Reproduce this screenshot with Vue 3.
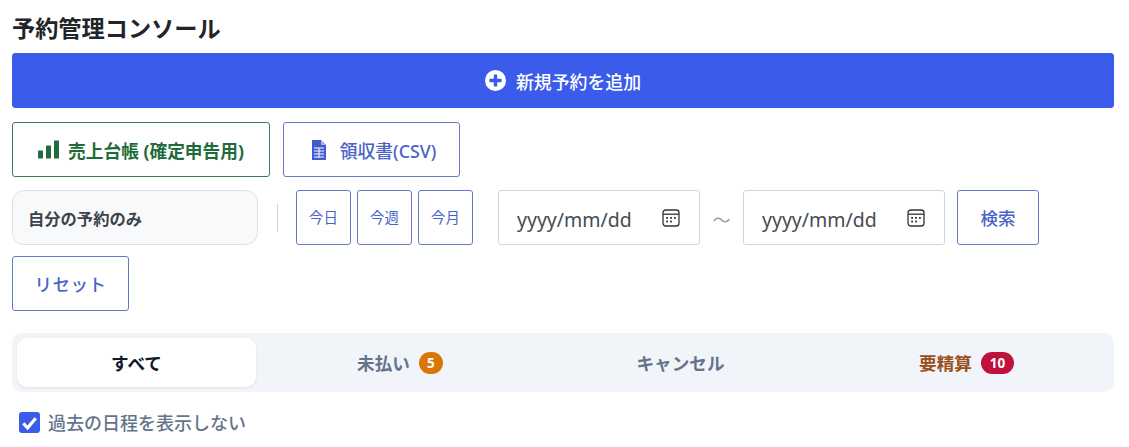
<script setup>
const quick = ['今日', '今週', '今月']
</script>

<template>
  <main class="page">
    <h1 class="title">予約管理コンソール</h1>
    <button class="add">
      <svg class="plus" viewBox="0 0 20 20" width="21" height="21">
        <circle cx="10" cy="10" r="10" fill="#fff" />
        <rect x="4.2" y="8.4" width="11.6" height="3.2" rx="0.6" fill="#3b5bea" />
        <rect x="8.4" y="4.2" width="3.2" height="11.6" rx="0.6" fill="#3b5bea" />
      </svg>
      <span>新規予約を追加</span>
    </button>

    <div class="exports">
      <button class="export green">
        <svg viewBox="0 0 21 18" width="21" height="19" fill="#1f6b3a">
          <rect x="0" y="10" width="5" height="8" rx="0.6" />
          <rect x="8" y="5" width="5" height="13" rx="0.6" />
          <rect x="16" y="0" width="5" height="18" rx="0.6" />
        </svg>
        <span>売上台帳 (確定申告用)</span>
      </button>
      <button class="export blue">
        <svg viewBox="0 0 16 20" width="16" height="20">
          <path d="M1 0h9l5 5v15H1z" fill="#3f5bd0" />
          <path d="M10 0v5h5z" fill="#a9b6ea" />
          <path d="M3 8h10M3 11h10M3 14h10M3 17h10M8 8v10" stroke="#fff" stroke-width="1" fill="none" />
        </svg>
        <span>領収書(CSV)</span>
      </button>
    </div>

    <div class="filters">
      <div class="mine">自分の予約のみ</div>
      <span class="divider"></span>
      <div class="quick">
        <button v-for="q in quick" :key="q" class="small">{{ q }}</button>
      </div>
      <div class="dates">
        <div class="date" v-for="n in 2" :key="n" :class="'date' + n">
          <span class="date-text">yyyy/mm/dd</span>
          <svg viewBox="0 0 18 18" width="18" height="18" fill="none">
            <rect x="1" y="1" width="16" height="16" rx="2.8" stroke="#333" stroke-width="1.3" />
            <path d="M1 5.2h16" stroke="#333" stroke-width="1.3" />
            <g fill="#333">
              <rect x="4.2" y="8" width="1.8" height="1.8" /><rect x="8.1" y="8" width="1.8" height="1.8" /><rect x="12" y="8" width="1.8" height="1.8" />
              <rect x="4.2" y="11.6" width="1.8" height="1.8" /><rect x="8.1" y="11.6" width="1.8" height="1.8" />
            </g>
          </svg>
        </div>
        <span class="tilde">〜</span>
      </div>
      <button class="action search">検索</button>
      <button class="action reset">リセット</button>
    </div>

    <div class="tabs">
      <div class="tab active">すべて</div>
      <div class="tab">未払い <span class="badge orange">5</span></div>
      <div class="tab">キャンセル</div>
      <div class="tab settle">要精算 <span class="badge red">10</span></div>
    </div>

    <label class="past">
      <span class="check">
        <svg viewBox="0 0 22 22" width="22" height="22">
          <path d="M4.5 11.5l4.5 4.5 8.5-10" fill="none" stroke="#fff" stroke-width="3.4" />
        </svg>
      </span>
      <span>過去の日程を表示しない</span>
    </label>
  </main>
</template>

<style>
body { margin: 0; background: #fff; }
</style>

<style scoped>
.page {
  box-sizing: border-box;
  width: 1129px;
  height: 447px;
  overflow: hidden;
  padding: 12px 15px 0 12px;
  font-family: "Noto Sans", "Noto Sans CJK JP", sans-serif;
}
button { font-family: inherit; background: #fff; cursor: pointer; }
.title {
  margin: 0 0 9px;
  font-size: 23.2px;
  line-height: 32px;
  font-weight: 700;
  color: #212529;
}
.add {
  display: flex;
  align-items: center;
  justify-content: center;
  gap: 10px;
  width: 100%;
  height: 55px;
  border: 1px solid #3b5bea;
  border-radius: 3px;
  background: #3b5bea;
  color: #fff;
  font-size: 17.9px;
  font-weight: 500;
}
.exports { display: flex; gap: 13px; margin-top: 14px; }
.export {
  display: flex;
  align-items: center;
  justify-content: center;
  height: 55px;
  padding: 0;
  border-radius: 3px;
  font-size: 17.7px;
}
.green {
  width: 258px;
  gap: 9px;
  border: 1px solid #3f7d55;
  color: #1f6b3a;
  font-weight: 700;
}
.blue {
  width: 177px;
  gap: 13px;
  padding-left: 4px;
  border: 1px solid #6478c8;
  color: #4a63c8;
  font-size: 17.8px;
  font-weight: 500;
}
.filters {
  display: flex;
  flex-wrap: wrap;
  align-items: center;
  gap: 11px 12px;
  margin-top: 13px;
}
.mine {
  box-sizing: border-box;
  display: flex;
  align-items: center;
  width: 246px;
  height: 55px;
  padding-left: 15px;
  border: 1px solid #dee2e6;
  border-radius: 12px;
  background: #f8f9fa;
  color: #3d434a;
  font-size: 16.3px;
  font-weight: 700;
}
.divider { width: 1px; height: 28px; margin: 0 6px 0 7px; background: #ced4da; }
.quick { display: flex; gap: 6px; }
.small {
  box-sizing: border-box;
  width: 55px;
  height: 55px;
  padding: 0 0 2px;
  border: 1px solid #6478c8;
  border-radius: 3px;
  color: #4a63c8;
  font-size: 14.4px;
}
.dates {
  display: grid;
  grid-template-columns: 202px 43px 202px;
  align-items: center;
  margin-left: 13px;
}
.date {
  box-sizing: border-box;
  display: flex;
  align-items: center;
  justify-content: space-between;
  height: 55px;
  padding: 0 19px 0 18px;
  border: 1px solid #ced4da;
  border-radius: 3px;
  color: #454b52;
  font-size: 19.5px;
}
.date-text { padding-top: 3px; }
.date1 { grid-column: 1; grid-row: 1; }
.date2 { grid-column: 3; grid-row: 1; }
.tilde { grid-column: 2; grid-row: 1; padding-top: 2px; text-align: center; color: #9aa0a6; font-size: 18px; }
.action {
  box-sizing: border-box;
  height: 55px;
  padding: 0;
  border: 1px solid #6478c8;
  border-radius: 3px;
  color: #4a63c8;
  font-size: 17.5px;
  font-weight: 500;
}
.search { width: 82px; }
.reset { width: 117px; letter-spacing: 0.5px; }
.tabs {
  display: grid;
  grid-template-columns: 239px 288px 273px 1fr;
  height: 59px;
  box-sizing: border-box;
  margin-top: 22px;
  padding: 5px;
  border-radius: 10px;
  background: #f1f4f9;
}
.tab {
  display: flex;
  align-items: center;
  justify-content: center;
  gap: 9px;
  border-radius: 10px;
  color: #64748b;
  font-size: 17.6px;
  font-weight: 700;
}
.tab.active { background: #fff; color: #0f172a; box-shadow: 0 1px 3px rgba(0,0,0,.08); }
.tab.settle { padding-left: 7px; color: #9a4f1c; }
.badge {
  display: inline-flex;
  align-items: center;
  justify-content: center;
  height: 22px;
  min-width: 24px;
  border-radius: 11px;
  color: #fff;
  font-size: 13.5px;
  font-weight: 700;
}
.orange { background: #d97706; }
.red { background: #be123c; min-width: 33px; }
.past {
  display: flex;
  align-items: center;
  gap: 8px;
  margin: 17px 0 0 7px;
  color: #64748b;
  font-size: 18px;
  font-weight: 500;
}
.check {
  display: flex;
  width: 21px;
  height: 21px;
  border-radius: 3px;
  background: #3b5bea;
}
</style>
